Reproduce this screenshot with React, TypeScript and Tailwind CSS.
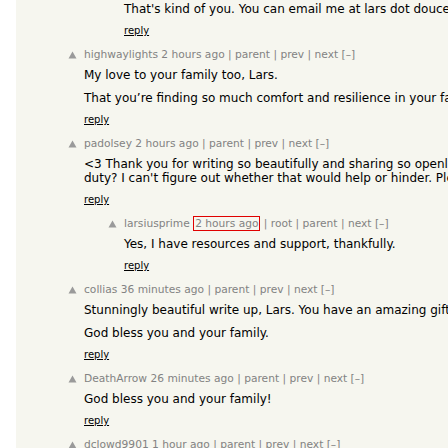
type CommentProps = {
  level: 0 | 1;
  user?: string;
  age?: string;
  links?: string[];
  boxedAge?: boolean;
  paragraphs: string[][];
  first?: boolean;
};

function VoteArrow() {
  return (
    <svg width="9" height="8" viewBox="0 0 9 8" className="block">
      <polygon points="4.5,0.5 8.5,7.5 0.5,7.5" fill="#9a9a9a" />
    </svg>
  );
}

function Comment({ level, user, age, links = [], boxedAge, paragraphs, first }: CommentProps) {
  return (
    <div className={`${level === 1 ? "pl-[40px]" : "pl-0"} ${first ? "pt-[2px]" : "mt-[10px]"}`}>
      {user && (
        <div className="flex h-[14px] items-center">
          <div className="flex w-[18px] shrink-0 justify-start pl-[2px]">
            <VoteArrow />
          </div>
          <div className="whitespace-nowrap text-[10.67px] leading-[14px] text-[#828282]">
            <span>{user}</span>{" "}
            <span className={boxedAge ? "border border-[#e00000] px-px" : ""}>{age}</span>
            {links.map((l) => (
              <span key={l}>
                {" | "}
                {l}
              </span>
            ))}
            {" [–]"}
          </div>
        </div>
      )}
      <div className={`pl-[18px] ${user ? "mt-[6px]" : ""}`}>
        {paragraphs.map((lines, i) => (
          <div key={i} className={`text-[12px] leading-[14px] text-black ${i > 0 ? "mt-[9px]" : ""}`}>
            {lines.map((ln, j) => (
              <div key={j} className="whitespace-nowrap">
                {ln}
              </div>
            ))}
          </div>
        ))}
        <div className="mt-[8px] text-[10px] leading-[14px] text-black underline">reply</div>
      </div>
    </div>
  );
}

export default function App() {
  return (
    <div className="h-[448px] w-[448px] overflow-hidden bg-white pl-[16px] font-['DejaVu_Sans',Verdana,sans-serif]">
      <div className="h-full w-[1000px] bg-[#f6f6ef] pl-[50px]">
        <Comment
          first
          level={1}
          paragraphs={[["That's kind of you. You can email me at lars dot doucet at gmail dot com."]]}
        />
        <Comment
          level={0}
          user="highwaylights"
          age="2 hours ago"
          links={["parent", "prev", "next"]}
          paragraphs={[
            ["My love to your family too, Lars."],
            ["That you\u2019re finding so much comfort and resilience in your faith is wonderful."],
          ]}
        />
        <Comment
          level={0}
          user="padolsey"
          age="2 hours ago"
          links={["parent", "prev", "next"]}
          paragraphs={[
            [
              "<3 Thank you for writing so beautifully and sharing so openly. Is there a",
              "duty? I can't figure out whether that would help or hinder. Please let",
            ],
          ]}
        />
        <Comment
          level={1}
          user="larsiusprime"
          age="2 hours ago"
          boxedAge
          links={["root", "parent", "next"]}
          paragraphs={[["Yes, I have resources and support, thankfully."]]}
        />
        <Comment
          level={0}
          user="collias"
          age="36 minutes ago"
          links={["parent", "prev", "next"]}
          paragraphs={[
            ["Stunningly beautiful write up, Lars. You have an amazing gift."],
            ["God bless you and your family."],
          ]}
        />
        <Comment
          level={0}
          user="DeathArrow"
          age="26 minutes ago"
          links={["parent", "prev", "next"]}
          paragraphs={[["God bless you and your family!"]]}
        />
        <Comment
          level={0}
          user="dclowd9901"
          age="1 hour ago"
          links={["parent", "prev", "next"]}
          paragraphs={[["Thank you for sharing."]]}
        />
      </div>
    </div>
  );
}
